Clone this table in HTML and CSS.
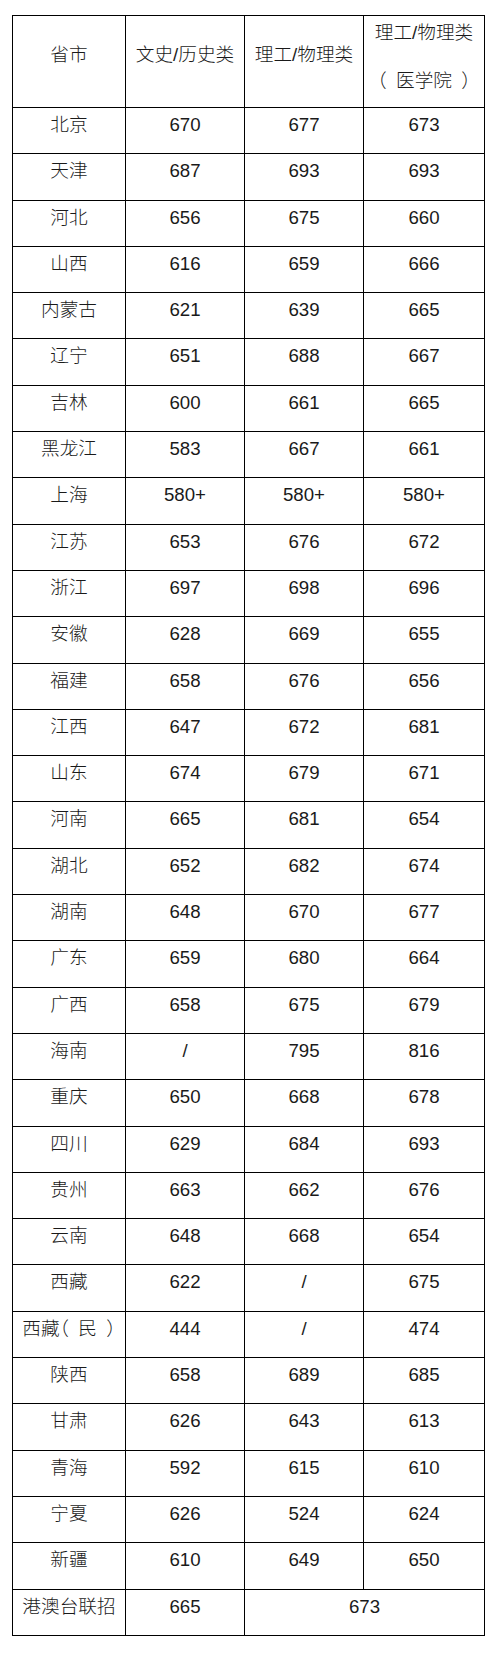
FILE: index.html
```html
<!DOCTYPE html>
<html lang="zh-CN">
<head>
<meta charset="utf-8">
<title>分数线</title>
<link rel="stylesheet" href="styles.css">
</head>
<body>
<table class="score-table">
  <colgroup>
    <col class="c1"><col class="c2"><col class="c3"><col class="c4">
  </colgroup>
  <thead>
    <tr class="head-row">
      <th class="mid">省市</th>
      <th class="mid">文史/历史类</th>
      <th class="mid">理工/物理类</th>
      <th class="two"><div class="l1">理工/物理类</div><div class="l2"><span class="po">（</span>医学院<span class="pc">）</span></div></th>
    </tr>
  </thead>
  <tbody>
    <tr><td>北京</td><td>670</td><td>677</td><td>673</td></tr>
    <tr><td>天津</td><td>687</td><td>693</td><td>693</td></tr>
    <tr><td>河北</td><td>656</td><td>675</td><td>660</td></tr>
    <tr><td>山西</td><td>616</td><td>659</td><td>666</td></tr>
    <tr><td>内蒙古</td><td>621</td><td>639</td><td>665</td></tr>
    <tr><td>辽宁</td><td>651</td><td>688</td><td>667</td></tr>
    <tr><td>吉林</td><td>600</td><td>661</td><td>665</td></tr>
    <tr><td>黑龙江</td><td>583</td><td>667</td><td>661</td></tr>
    <tr><td>上海</td><td>580+</td><td>580+</td><td>580+</td></tr>
    <tr><td>江苏</td><td>653</td><td>676</td><td>672</td></tr>
    <tr><td>浙江</td><td>697</td><td>698</td><td>696</td></tr>
    <tr><td>安徽</td><td>628</td><td>669</td><td>655</td></tr>
    <tr><td>福建</td><td>658</td><td>676</td><td>656</td></tr>
    <tr><td>江西</td><td>647</td><td>672</td><td>681</td></tr>
    <tr><td>山东</td><td>674</td><td>679</td><td>671</td></tr>
    <tr><td>河南</td><td>665</td><td>681</td><td>654</td></tr>
    <tr><td>湖北</td><td>652</td><td>682</td><td>674</td></tr>
    <tr><td>湖南</td><td>648</td><td>670</td><td>677</td></tr>
    <tr><td>广东</td><td>659</td><td>680</td><td>664</td></tr>
    <tr><td>广西</td><td>658</td><td>675</td><td>679</td></tr>
    <tr><td>海南</td><td>/</td><td>795</td><td>816</td></tr>
    <tr><td>重庆</td><td>650</td><td>668</td><td>678</td></tr>
    <tr><td>四川</td><td>629</td><td>684</td><td>693</td></tr>
    <tr><td>贵州</td><td>663</td><td>662</td><td>676</td></tr>
    <tr><td>云南</td><td>648</td><td>668</td><td>654</td></tr>
    <tr><td>西藏</td><td>622</td><td>/</td><td>675</td></tr>
    <tr><td>西藏<span class="po">（</span>民<span class="pc">）</span></td><td>444</td><td>/</td><td>474</td></tr>
    <tr><td>陕西</td><td>658</td><td>689</td><td>685</td></tr>
    <tr><td>甘肃</td><td>626</td><td>643</td><td>613</td></tr>
    <tr><td>青海</td><td>592</td><td>615</td><td>610</td></tr>
    <tr><td>宁夏</td><td>626</td><td>524</td><td>624</td></tr>
    <tr><td>新疆</td><td>610</td><td>649</td><td>650</td></tr>
    <tr><td>港澳台联招</td><td>665</td><td colspan="2">673</td></tr>
  </tbody>
</table>
</body>
</html>
```

FILE: styles.css
```css
html, body {
  margin: 0;
  padding: 0;
  background: #ffffff;
}

body {
  font-family: "Liberation Sans", "Noto Sans CJK SC", sans-serif;
  font-size: 18.67px;
  font-weight: 300;
  color: #1a1a1a;
  text-spacing-trim: space-all;
}

.score-table {
  margin: 15px 0 0 12px;
  border-collapse: collapse;
  table-layout: fixed;
  width: 472px;
}

.c1 { width: 113px; }
.c2 { width: 119px; }
.c3 { width: 119px; }
.c4 { width: 121px; }

.score-table th,
.score-table td {
  border: 1px solid #000;
  padding: 0;
  text-align: center;
  vertical-align: top;
  font-weight: 300;
  line-height: 34px;
  white-space: nowrap;
}

.score-table tbody tr {
  height: 46.3px;
}

.head-row {
  height: 92px;
}

.score-table th.mid {
  padding-top: 22px;
}

.score-table th.two .l2 {
  margin-top: 14px;
}

.po,
.pc {
  font-feature-settings: "halt" 1;
}

.po {
  padding-right: 0.5em;
}

.pc {
  padding-left: 0.5em;
}
```
